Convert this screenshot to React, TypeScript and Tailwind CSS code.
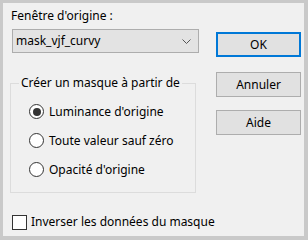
import React from "react";

const options = [
  { label: "Luminance d'origine", checked: true },
  { label: "Toute valeur sauf zéro", checked: false },
  { label: "Opacité d'origine", checked: false },
];

const Radio = ({ checked }: { checked: boolean }) => (
  <span className="flex h-[15px] w-[15px] shrink-0 items-center justify-center rounded-full border border-[#333333] bg-white">
    {checked && <span className="h-[8px] w-[8px] rounded-full bg-[#333333]" />}
  </span>
);

const Button = ({ label, primary }: { label: string; primary?: boolean }) => (
  <button
    className={
      primary
        ? "flex h-[25px] w-[85px] items-center justify-center border-2 border-[#0078d7] bg-[#e1e1e1] text-black"
        : "flex h-[25px] w-[85px] items-center justify-center border border-[#adadad] bg-[#e1e1e1] text-black"
    }
  >
    {label}
  </button>
);

export default function App() {
  return (
    <div className="h-[240px] w-[308px] bg-[#c9c9c9] pb-[4px] pl-[3px] pr-[4px] pt-[3px]">
      <div
        className="flex h-full bg-[#f0f0f0] text-[12px] leading-[16px] text-black"
        style={{ fontFamily: "'Noto Sans', 'Open Sans', sans-serif" }}
      >
        {/* left column */}
        <div className="flex w-[196px] shrink-0 flex-col pl-[7px] pt-[5px]">
          <div className="h-[16px] pl-[1px]">Fenêtre d'origine :</div>
          <div className="ml-[2px] mt-[5px] flex h-[24px] w-[187px] items-center justify-between border border-[#adadad] bg-[#e3e3e3] pl-[3px] pr-[7px]">
            <span>mask_vjf_curvy</span>
            <svg width="9" height="5" viewBox="0 0 9 5" fill="none">
              <path d="M0.5 0.5 L4.5 4.5 L8.5 0.5" stroke="#555" strokeWidth="1" />
            </svg>
          </div>
          <fieldset className="mt-[22px] h-[118px] w-[186px] border border-[#dcdcdc]">
            <legend className="ml-[8px] px-[2px]">Créer un masque à partir de</legend>
            <div className="flex flex-col pl-[18px] pt-[6px]">
              {options.map((o) => (
                <div key={o.label} className="flex h-[29px] items-center gap-[5px]">
                  <Radio checked={o.checked} />
                  <span>{o.label}</span>
                </div>
              ))}
            </div>
          </fieldset>
          <div className="ml-[2px] mt-[21px] flex items-center gap-[4px] whitespace-nowrap">
            <span className="h-[15px] w-[15px] shrink-0 border border-[#333333] bg-white" />
            <span>Inverser les données du masque</span>
          </div>
        </div>
        {/* right column */}
        <div className="ml-[17px] flex flex-col gap-[15px] pt-[29px]">
          <Button label="OK" primary />
          <Button label="Annuler" />
          <div className="-mt-[2px]">
            <Button label="Aide" />
          </div>
        </div>
      </div>
    </div>
  );
}
